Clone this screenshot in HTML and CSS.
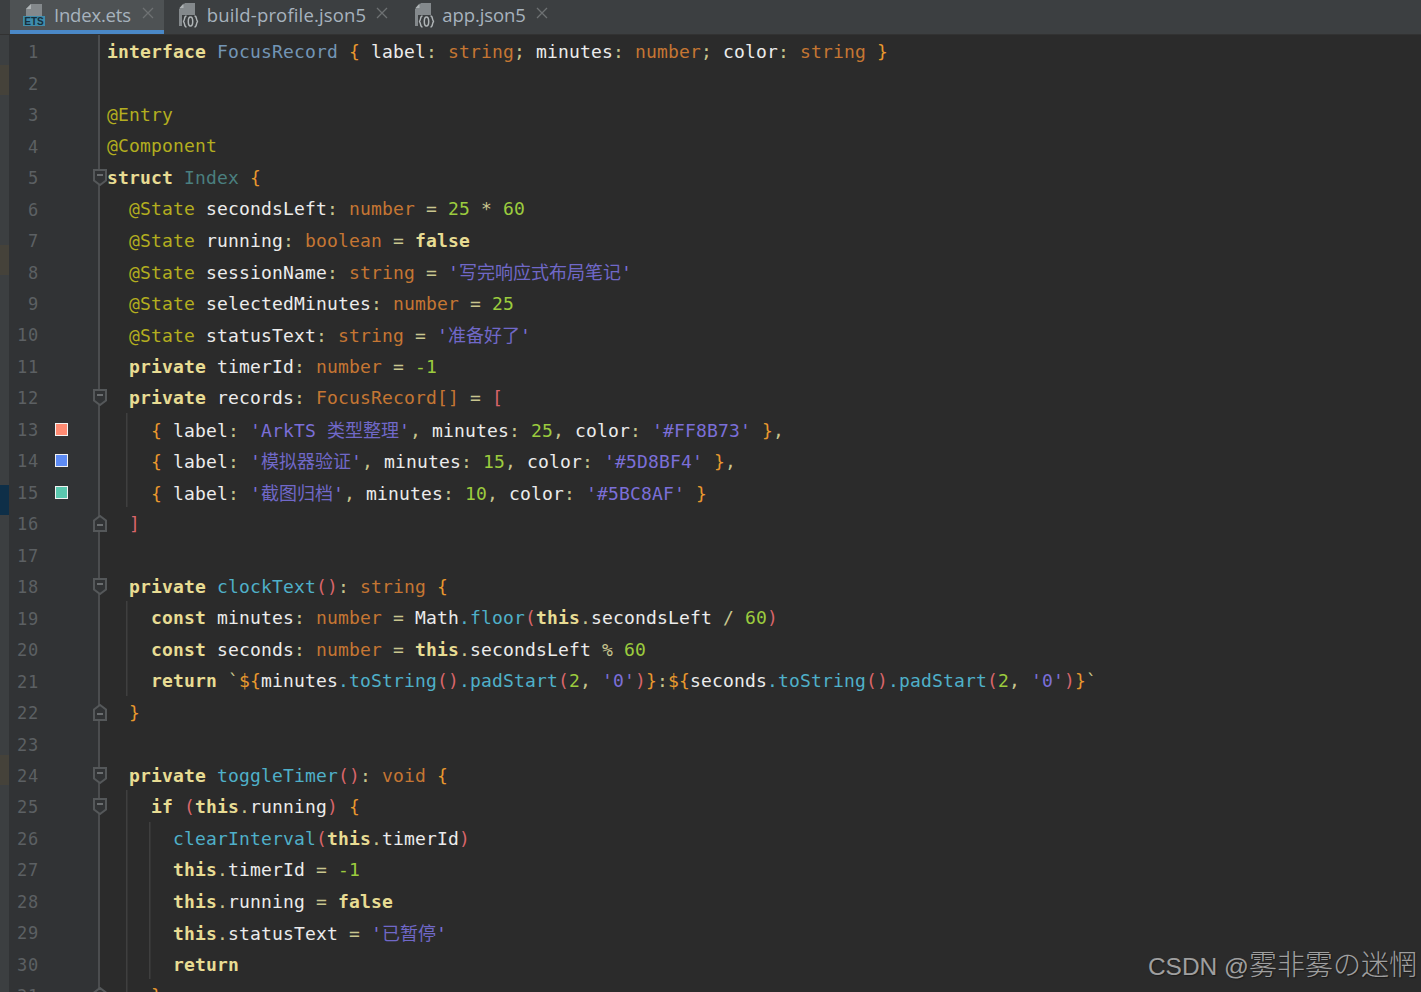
FILE: index.html
```html
<!DOCTYPE html>
<html lang="zh">
<head>
<meta charset="utf-8">
<title>Index.ets</title>
<link rel="stylesheet" href="styles.css">
</head>
<body>
<svg class="defs" width="0" height="0" aria-hidden="true">
  <symbol id="fold-down" viewBox="0 0 14 17"><path class="fold-shape" d="M1 1h12v10.500L7 16l-6-4.500z"/><path class="fold-minus" d="M4 6h6"/></symbol>
  <symbol id="fold-up" viewBox="0 0 14 17"><path class="fold-shape" d="M1 16V5.500L7 1l6 4.500V16z"/><path class="fold-minus" d="M4 10h6"/></symbol>
  <symbol id="close" viewBox="0 0 12 12"><path class="close-x" d="M1 1l10 10M11 1L1 11"/></symbol>
  <symbol id="json-icon" viewBox="0 0 20 25">
    <path class="page" d="M6 0h10v12H3v11H0V6z"/>
    <path class="page-fold" d="M4.500 0.500v4.500H0.500z"/>
    <path class="json-brace" d="M7.500 13c-3 0-1 5-3.500 5.500 2.500 .5 .5 5.500 3.500 5.500M15.500 13c3 0 1 5 3.500 5.500-2.500 .5-.5 5.500-3.500 5.500"/>
    <ellipse class="json-brace" cx="11.500" cy="18.500" rx="2.200" ry="4.500"/>
  </symbol>
</svg>

<nav class="tabbar">
  <div class="tab tab-active">
    <svg class="tab-icon-ets" width="22" height="24" viewBox="0 0 22 24">
      <path class="page" d="M8 1h11v12H3V6z"/>
      <path class="page-fold" d="M8 1v5H3z"/>
      <rect class="ets-bg" x="0" y="13" width="22" height="10"/>
      <text class="ets-text" x="11" y="22">ETS</text>
    </svg>
    <span class="tab-label">Index.ets</span>
    <svg class="tab-close" width="12" height="12"><use href="#close"/></svg>
  </div>
  <div class="tab">
    <svg class="tab-icon" width="20" height="25"><use href="#json-icon"/></svg>
    <span class="tab-label">build-profile.json5</span>
    <svg class="tab-close" width="12" height="12"><use href="#close"/></svg>
  </div>
  <div class="tab">
    <svg class="tab-icon" width="20" height="25"><use href="#json-icon"/></svg>
    <span class="tab-label">app.json5</span>
    <svg class="tab-close" width="12" height="12"><use href="#close"/></svg>
  </div>
</nav>

<main class="editor">
  <div class="rail">
    <span class="mark mark-warn mark-a"></span>
    <span class="mark mark-warn mark-b"></span>
    <span class="mark mark-info mark-c"></span>
    <span class="mark mark-warn mark-d"></span>
  </div>
  <div class="row"><div class="gutter"><span class="num">1</span></div><div class="code"><span class="k">interface</span> <span class="c">FocusRecord</span> <span class="B">{</span> <span class="v">label</span><span class="o">:</span> <span class="t">string</span><span class="o">;</span> <span class="v">minutes</span><span class="o">:</span> <span class="t">number</span><span class="o">;</span> <span class="v">color</span><span class="o">:</span> <span class="t">string</span> <span class="B">}</span></div></div>
  <div class="row"><div class="gutter"><span class="num">2</span></div><div class="code"></div></div>
  <div class="row"><div class="gutter"><span class="num">3</span></div><div class="code"><span class="d">@Entry</span></div></div>
  <div class="row"><div class="gutter"><span class="num">4</span></div><div class="code"><span class="d">@Component</span></div></div>
  <div class="row"><div class="gutter"><span class="num">5</span><svg class="fold" width="14" height="17"><use href="#fold-down"/></svg></div><div class="code"><span class="k">struct</span> <span class="i">Index</span> <span class="B">{</span></div></div>
  <div class="row"><div class="gutter"><span class="num">6</span></div><div class="code">  <span class="d">@State</span> <span class="v">secondsLeft</span><span class="o">:</span> <span class="t">number</span> <span class="o">=</span> <span class="n">25</span> <span class="o">*</span> <span class="n">60</span></div></div>
  <div class="row"><div class="gutter"><span class="num">7</span></div><div class="code">  <span class="d">@State</span> <span class="v">running</span><span class="o">:</span> <span class="t">boolean</span> <span class="o">=</span> <span class="k">false</span></div></div>
  <div class="row"><div class="gutter"><span class="num">8</span></div><div class="code">  <span class="d">@State</span> <span class="v">sessionName</span><span class="o">:</span> <span class="t">string</span> <span class="o">=</span> <span class="s">'<span class="z">写完响应式布局笔记</span>'</span></div></div>
  <div class="row"><div class="gutter"><span class="num">9</span></div><div class="code">  <span class="d">@State</span> <span class="v">selectedMinutes</span><span class="o">:</span> <span class="t">number</span> <span class="o">=</span> <span class="n">25</span></div></div>
  <div class="row"><div class="gutter"><span class="num">10</span></div><div class="code">  <span class="d">@State</span> <span class="v">statusText</span><span class="o">:</span> <span class="t">string</span> <span class="o">=</span> <span class="s">'<span class="z">准备好了</span>'</span></div></div>
  <div class="row"><div class="gutter"><span class="num">11</span></div><div class="code">  <span class="k">private</span> <span class="v">timerId</span><span class="o">:</span> <span class="t">number</span> <span class="o">=</span> <span class="n">-1</span></div></div>
  <div class="row"><div class="gutter"><span class="num">12</span><svg class="fold" width="14" height="17"><use href="#fold-down"/></svg></div><div class="code">  <span class="k">private</span> <span class="v">records</span><span class="o">:</span> <span class="t">FocusRecord[]</span> <span class="o">=</span> <span class="b">[</span></div></div>
  <div class="row"><div class="gutter"><span class="num">13</span><span class="swatch swatch-orange"></span></div><div class="code g1">    <span class="B">{</span> <span class="v">label</span><span class="o">:</span> <span class="s">'ArkTS <span class="z">类型整理</span>'</span><span class="o">,</span> <span class="v">minutes</span><span class="o">:</span> <span class="n">25</span><span class="o">,</span> <span class="v">color</span><span class="o">:</span> <span class="s">'#FF8B73'</span> <span class="B">}</span><span class="o">,</span></div></div>
  <div class="row"><div class="gutter"><span class="num">14</span><span class="swatch swatch-blue"></span></div><div class="code g1">    <span class="B">{</span> <span class="v">label</span><span class="o">:</span> <span class="s">'<span class="z">模拟器验证</span>'</span><span class="o">,</span> <span class="v">minutes</span><span class="o">:</span> <span class="n">15</span><span class="o">,</span> <span class="v">color</span><span class="o">:</span> <span class="s">'#5D8BF4'</span> <span class="B">}</span><span class="o">,</span></div></div>
  <div class="row"><div class="gutter"><span class="num">15</span><span class="swatch swatch-green"></span></div><div class="code g1">    <span class="B">{</span> <span class="v">label</span><span class="o">:</span> <span class="s">'<span class="z">截图归档</span>'</span><span class="o">,</span> <span class="v">minutes</span><span class="o">:</span> <span class="n">10</span><span class="o">,</span> <span class="v">color</span><span class="o">:</span> <span class="s">'#5BC8AF'</span> <span class="B">}</span></div></div>
  <div class="row"><div class="gutter"><span class="num">16</span><svg class="fold" width="14" height="17"><use href="#fold-up"/></svg></div><div class="code">  <span class="b">]</span></div></div>
  <div class="row"><div class="gutter"><span class="num">17</span></div><div class="code"></div></div>
  <div class="row"><div class="gutter"><span class="num">18</span><svg class="fold" width="14" height="17"><use href="#fold-down"/></svg></div><div class="code">  <span class="k">private</span> <span class="f">clockText</span><span class="b">()</span><span class="o">:</span> <span class="t">string</span> <span class="B">{</span></div></div>
  <div class="row"><div class="gutter"><span class="num">19</span></div><div class="code g1">    <span class="k">const</span> <span class="v">minutes</span><span class="o">:</span> <span class="t">number</span> <span class="o">=</span> <span class="v">Math</span><span class="f">.floor</span><span class="b">(</span><span class="k">this</span><span class="o">.</span><span class="v">secondsLeft</span> <span class="o">/</span> <span class="n">60</span><span class="b">)</span></div></div>
  <div class="row"><div class="gutter"><span class="num">20</span></div><div class="code g1">    <span class="k">const</span> <span class="v">seconds</span><span class="o">:</span> <span class="t">number</span> <span class="o">=</span> <span class="k">this</span><span class="o">.</span><span class="v">secondsLeft</span> <span class="o">%</span> <span class="n">60</span></div></div>
  <div class="row"><div class="gutter"><span class="num">21</span></div><div class="code g1">    <span class="k">return</span> <span class="o">`</span><span class="B">${</span><span class="v">minutes</span><span class="f">.toString</span><span class="b">()</span><span class="f">.padStart</span><span class="b">(</span><span class="n">2</span><span class="o">,</span> <span class="s">'0'</span><span class="b">)</span><span class="B">}</span><span class="o">:</span><span class="B">${</span><span class="v">seconds</span><span class="f">.toString</span><span class="b">()</span><span class="f">.padStart</span><span class="b">(</span><span class="n">2</span><span class="o">,</span> <span class="s">'0'</span><span class="b">)</span><span class="B">}</span><span class="o">`</span></div></div>
  <div class="row"><div class="gutter"><span class="num">22</span><svg class="fold" width="14" height="17"><use href="#fold-up"/></svg></div><div class="code">  <span class="B">}</span></div></div>
  <div class="row"><div class="gutter"><span class="num">23</span></div><div class="code"></div></div>
  <div class="row"><div class="gutter"><span class="num">24</span><svg class="fold" width="14" height="17"><use href="#fold-down"/></svg></div><div class="code">  <span class="k">private</span> <span class="f">toggleTimer</span><span class="b">()</span><span class="o">:</span> <span class="t">void</span> <span class="B">{</span></div></div>
  <div class="row"><div class="gutter"><span class="num">25</span><svg class="fold" width="14" height="17"><use href="#fold-down"/></svg></div><div class="code g1">    <span class="k">if</span> <span class="b">(</span><span class="k">this</span><span class="o">.</span><span class="v">running</span><span class="b">)</span> <span class="B">{</span></div></div>
  <div class="row"><div class="gutter"><span class="num">26</span></div><div class="code g2">      <span class="f">clearInterval</span><span class="b">(</span><span class="k">this</span><span class="o">.</span><span class="v">timerId</span><span class="b">)</span></div></div>
  <div class="row"><div class="gutter"><span class="num">27</span></div><div class="code g2">      <span class="k">this</span><span class="o">.</span><span class="v">timerId</span> <span class="o">=</span> <span class="n">-1</span></div></div>
  <div class="row"><div class="gutter"><span class="num">28</span></div><div class="code g2">      <span class="k">this</span><span class="o">.</span><span class="v">running</span> <span class="o">=</span> <span class="k">false</span></div></div>
  <div class="row"><div class="gutter"><span class="num">29</span></div><div class="code g2">      <span class="k">this</span><span class="o">.</span><span class="v">statusText</span> <span class="o">=</span> <span class="s">'<span class="z">已暂停</span>'</span></div></div>
  <div class="row"><div class="gutter"><span class="num">30</span></div><div class="code g2">      <span class="k">return</span></div></div>
  <div class="row"><div class="gutter"><span class="num">31</span><svg class="fold" width="14" height="17"><use href="#fold-up"/></svg></div><div class="code g1">    <span class="B">}</span></div></div>
</main>

<div class="watermark"><span class="wm-latin">CSDN @</span><span class="wm-cjk">雾非雾の迷惘</span></div>
</body>
</html>
```
FILE: styles.css
```css
html, body {
  margin: 0;
  height: 992px;
  overflow: hidden;
  background: #2b2b2b;
}
body { position: relative; }
.defs { position: absolute; }

/* Tab bar */
.tabbar {
  display: flex;
  height: 35px;
  box-sizing: border-box;
  padding-left: 10px;
  background: #3c3f41;
  border-bottom: 1px solid #323232;
  font-family: "Open Sans", "Liberation Sans", sans-serif;
}
.tab {
  display: flex;
  align-items: center;
  height: 34px;
  box-sizing: border-box;
  padding: 0 12px 4px 15px;
  color: #a7b3be;
  font-size: 18.5px;
}
.tab-active {
  padding-left: 13px;
  padding-right: 10px;
  background: #4e5254;
  border-bottom: 4px solid #4a88c7;
  padding-bottom: 0;
}
.tab-label { margin-top: -2px; letter-spacing: 0.15px; }
.tab:last-child .tab-label { letter-spacing: -0.1px; }
.tab-active .tab-label { letter-spacing: -0.2px; }
.tab-icon { margin-right: 8px; flex: none; }
.tab:last-child .tab-icon { margin-right: 7px; }
.tab-icon-ets { margin-right: 9px; flex: none; }
.tab-close { margin-left: 10px; flex: none; margin-top: -4px; }
.tab-active .tab-close { margin-left: 11px; }
.close-x { stroke: #6e7173; stroke-width: 1.3; fill: none; }
.page { fill: #84898c; }
.page-fold { fill: #aeb3b5; }
.ets-bg { fill: #3f8cab; }
.ets-text {
  fill: #16303d;
  font: 700 10px "Liberation Sans", sans-serif;
  text-anchor: middle;
}
.json-brace { fill: none; stroke: #b0b5b7; stroke-width: 1.500; }

/* Editor */
.editor {
  position: relative;
  display: flex;
  flex-direction: column;
  padding-left: 9px;
  background: linear-gradient(#3c3f41, #3c3f41) 0 0 / 9px 100% no-repeat;
}
.rail {
  position: absolute;
  left: 0;
  top: 0;
  width: 9px;
  display: flex;
  flex-direction: column;
}
.mark { flex: none; height: 30px; }
.mark-warn { background: #45423a; }
.mark-info { background: #0e2f48; }
.mark-a { margin-top: 30px; }
.mark-b { margin-top: 150px; }
.mark-c { margin-top: 210px; }
.mark-d { margin-top: 240px; }
.row {
  display: flex;
  flex: none;
  height: 31.48px;
}
.gutter {
  position: relative;
  flex: none;
  display: flex;
  align-items: center;
  width: 91px;
  box-sizing: border-box;
  padding-top: 2px;
  background: #313335;
  border-right: 2px solid #4b4d4f;
}
.num {
  flex: none;
  width: 30px;
  padding-top: 2px;
  text-align: right;
  color: #5c6063;
  font: 17px/1 "DejaVu Sans Mono", monospace;
  letter-spacing: 0.75px;
}
.swatch {
  flex: none;
  width: 13px;
  height: 13px;
  box-sizing: border-box;
  margin-left: 16px;
  border: 1px solid #f2f2f2;
}
.swatch-orange { background: #ff8b73; }
.swatch-blue { background: #5d8bf4; }
.swatch-green { background: #5bc8af; }
.fold {
  position: absolute;
  right: -9px;
  top: 8px;
}
.fold-shape { fill: #313335; stroke: #55585a; stroke-width: 2; }
.fold-minus { fill: none; stroke: #6a6d6f; stroke-width: 2; }

.code {
  flex: 1;
  min-width: 0;
  height: 31.48px;
  padding-left: 7px;
  white-space: pre;
  color: #e6e6e6;
  font: 18px/33.1px "DejaVu Sans Mono", monospace;
  letter-spacing: 0.16px;
}
.g1 {
  background: linear-gradient(#3f3f3f, #3f3f3f) 26px 0 / 1.500px 100% no-repeat;
}
.g2 {
  background:
    linear-gradient(#3f3f3f, #3f3f3f) 26px 0 / 1.500px 100% no-repeat,
    linear-gradient(#3f3f3f, #3f3f3f) 49px 0 / 1.500px 100% no-repeat;
}

/* Syntax tokens */
.k { color: #e8dc93; font-weight: 700; }
.v { color: #ececec; }
.o { color: #c9c68f; }
.t { color: #c57633; }
.c { color: #7395b5; }
.i { color: #4a7f7f; }
.d { color: #b3ae1f; }
.f { color: #4fb0c9; }
.b { color: #d9656a; }
.B { color: #e8982e; }
.s { color: #7b6fd8; }
.n { color: #9ccc3e; }
.z {
  font-family: "Noto Sans CJK SC", sans-serif;
  font-size: 18px;
  letter-spacing: 0;
  color: #7068c8;
}

/* Watermark */
.watermark {
  position: absolute;
  right: 4px;
  bottom: 9px;
  display: flex;
  align-items: baseline;
  color: #9f9f9f;
  text-shadow: 1px 1px 1px #1c1c1c;
  white-space: pre;
  font-family: "Liberation Sans", "Noto Sans CJK SC", sans-serif;
}
.wm-latin { font-size: 24.500px; }
.wm-cjk { font-family: "Noto Sans CJK SC", sans-serif; font-size: 28px; font-weight: 300; }
```
